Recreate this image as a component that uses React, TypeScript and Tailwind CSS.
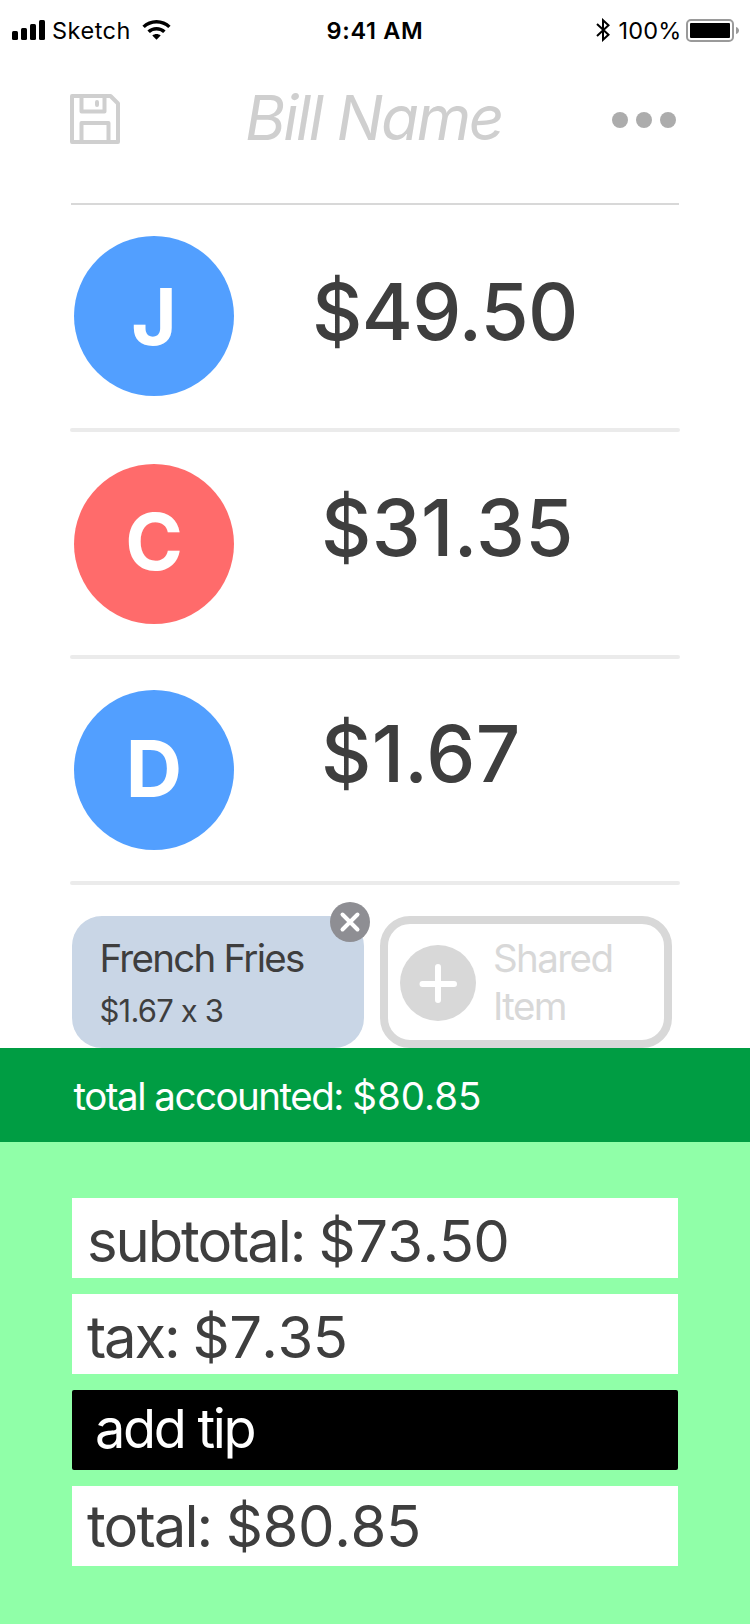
import React from "react";

type Person = {
  initial: string;
  circleClass: string;
  rowClass: string;
  amount: string;
  amountClass: string;
};

const people: Person[] = [
  {
    initial: "J",
    circleClass: "bg-[#529fff]",
    rowClass: "h-[223px] pt-[31px]",
    amount: "$49.50",
    amountClass: "pl-[78px] pt-6 tracking-[-0.7px]",
  },
  {
    initial: "C",
    circleClass: "bg-[#ff6b6b] pb-[5px]",
    rowClass: "h-[223px] pt-8",
    amount: "$31.35",
    amountClass: "pl-[87px] pt-3 tracking-[0.4px]",
  },
  {
    initial: "D",
    circleClass: "bg-[#529fff] pb-1",
    rowClass: "h-[222px] pt-[31px]",
    amount: "$1.67",
    amountClass: "pl-[87px] pt-3 tracking-[0.3px]",
  },
];

function StatusBar() {
  return (
    <div className="flex h-[60px] items-center text-[23.5px] leading-[28px] text-black">
      <svg className="ml-3 h-5 w-[33px] shrink-0" viewBox="0 0 33 20">
        <rect x="0" y="11" width="6" height="9" rx="1.5" />
        <rect x="9" y="8" width="6" height="12" rx="1.5" />
        <rect x="18" y="4" width="6" height="16" rx="1.5" />
        <rect x="27" y="0" width="6" height="20" rx="1.5" />
      </svg>
      <span className="ml-[7px] w-[90px] pt-0.5 tracking-[0.5px]">Sketch</span>
      <svg className="h-5 w-[29px] shrink-0" viewBox="0 0 29 20">
        <path d="M14.5 0C20 0 25 2.200 28.600 5.700L26.200 8.100C23 5.100 19 3.600 14.500 3.600S6 5.100 2.800 8.100L.4 5.700C4 2.200 9 0 14.500 0Z" />
        <path d="M14.500 7C18 7 21 8.200 23.600 10.500L21.100 13C19.200 11.300 17 10.500 14.500 10.500S9.800 11.300 7.900 13L5.400 10.500C8 8.200 11 7 14.500 7Z" />
        <path d="M14.500 14C16 14 17.500 14.500 18.700 15.500L14.500 19.700L10.300 15.500C11.500 14.500 13 14 14.500 14Z" />
      </svg>
      <span className="ml-[155.5px] w-[100px] whitespace-nowrap pt-0.5 font-semibold tracking-[0.7px]">9:41 AM</span>
      <svg className="ml-auto h-6 w-[15px] shrink-0" viewBox="0 0 15 24">
        <path d="M1 6L12.500 16.800L7 21.800V2.200L12.500 7.200L1 18" fill="none" stroke="black" strokeWidth="2" />
      </svg>
      <span className="ml-[7.5px] w-[67.5px] pt-0.5 tracking-[0.2px]">100%</span>
      <svg className="mr-[11px] mt-px h-[23px] w-[53px] shrink-0" viewBox="0 0 53 23">
        <rect x="1" y="1" width="46" height="21" rx="4" fill="none" stroke="#9a9a9a" strokeWidth="2" />
        <rect x="4" y="4" width="40" height="15" rx="1" />
        <path d="M50 8C52 8.500 53 10 53 11.500S52 14.500 50 15Z" fill="#9a9a9a" />
      </svg>
    </div>
  );
}

function Header() {
  return (
    <header className="mx-[71px] flex h-[145px] items-start justify-between border-b-2 border-[#d8d8d8] pt-[34px]">
      <svg className="-ml-px h-[50px] w-[50px]" viewBox="0 0 50 50" fill="none" stroke="#cfcfcf" strokeWidth="4" strokeLinejoin="round" strokeLinecap="round">
        <path d="M2 2H40.500L48 9.500V48H2Z" />
        <path d="M11.500 2V17.500H34.500V2M11.500 48V29H38.500V48M27 8V11" />
      </svg>
      <h1 className="-mt-px ml-[15px] whitespace-nowrap text-[62px] italic leading-[50px] tracking-[-2.3px] text-[#cfcfcf]">Bill Name</h1>
      <svg className="mr-[3px] mt-[18px] h-4 w-16" viewBox="0 0 64 16" fill="#acacac">
        <circle cx="8" cy="8" r="8" />
        <circle cx="32" cy="8" r="8" />
        <circle cx="56" cy="8" r="8" />
      </svg>
    </header>
  );
}

function PersonRow({ person }: { person: Person }) {
  return (
    <div>
      <div className={`flex pl-1 ${person.rowClass}`}>
        <div className={`flex h-40 w-40 items-center justify-center rounded-full text-[78px] font-bold text-white ${person.circleClass}`}>
          {person.initial}
        </div>
        <div className={`whitespace-nowrap text-[78px] font-medium leading-[104px] text-[#3e3e3e] ${person.amountClass}`}>{person.amount}</div>
      </div>
      <div className="h-1 rounded-full bg-[#ebebeb]" />
    </div>
  );
}

function Items() {
  return (
    <div className="ml-[72px] mt-[31px] flex h-[132px] gap-4 text-[38.5px] leading-[48px]">
      <div className="relative h-[132px] w-[292px] rounded-[30px] bg-[#c9d6e6] pl-[27.5px] pt-[18px] text-[#3e3e3e]">
        <div className="whitespace-nowrap tracking-[-1.75px]">French Fries</div>
        <div className="text-[31px] leading-[58px] tracking-[-0.8px]">$1.67 x 3</div>
        <svg className="absolute -right-[6px] -top-[14px] h-10 w-10" viewBox="0 0 40 40">
          <circle cx="20" cy="20" r="20" fill="#8e8e93" />
          <path d="M12.500 12.500L27.500 27.500M27.500 12.500L12.500 27.500" stroke="white" strokeWidth="4" strokeLinecap="round" />
        </svg>
      </div>
      <div className="flex h-[132px] w-[292px] rounded-[30px] border-8 border-[#d8d8d8] pl-3 text-[#d8d8d8]">
        <svg className="mt-[21px] h-[76px] w-[76px]" viewBox="0 0 76 76">
          <circle cx="38" cy="38" r="38" fill="#d8d8d8" />
          <path d="M22.500 39H54M38 22V55" stroke="white" strokeWidth="6" strokeLinecap="round" />
        </svg>
        <div className="ml-[17px] pt-2.5 tracking-[-1.6px]">
          Shared
          <br />
          Item
        </div>
      </div>
    </div>
  );
}

function Summary() {
  return (
    <div className="flex grow flex-col gap-4 bg-[#90ffa8] px-[72px] pt-14 text-[58px] text-[#3e3e3e]">
      <div className="h-20 whitespace-nowrap bg-white pl-[15px] leading-[86px]">
        <span className="tracking-[-2.1px]">subtotal: </span>
        <span className="tracking-[-0.6px] [font-kerning:none]">$73.50</span>
      </div>
      <div className="h-20 whitespace-nowrap bg-white pl-[15px] leading-[86px]">
        <span className="tracking-[-2.2px]">tax: </span>
        <span className="tracking-[-0.6px] [font-kerning:none]">$7.35</span>
      </div>
      <div className="h-20 rounded-[2px] bg-black pl-[23px] text-[54px] leading-[78px] tracking-[-2.3px] text-white">add tip</div>
      <div className="h-20 whitespace-nowrap bg-white pl-[15px] leading-[80px]">
        <span className="tracking-[-1.9px]">total: </span>
        <span className="tracking-[-0.4px] [font-kerning:none]">$80.85</span>
      </div>
    </div>
  );
}

export default function App() {
  return (
    <main className="flex h-[1624px] w-[750px] flex-col overflow-hidden bg-white font-['Inter',sans-serif] [font-feature-settings:'calt'_0]">
      <StatusBar />
      <Header />
      <section className="mx-[70px]">
        {people.map((p) => (
          <PersonRow key={p.initial} person={p} />
        ))}
      </section>
      <Items />
      <div className="h-[94px] bg-[#009d43] pl-[73.5px] text-[38.5px] leading-[96px] text-white">
        <span className="tracking-[-1.5px]">total accounted: </span>
        <span>$80.85</span>
      </div>
      <Summary />
    </main>
  );
}
